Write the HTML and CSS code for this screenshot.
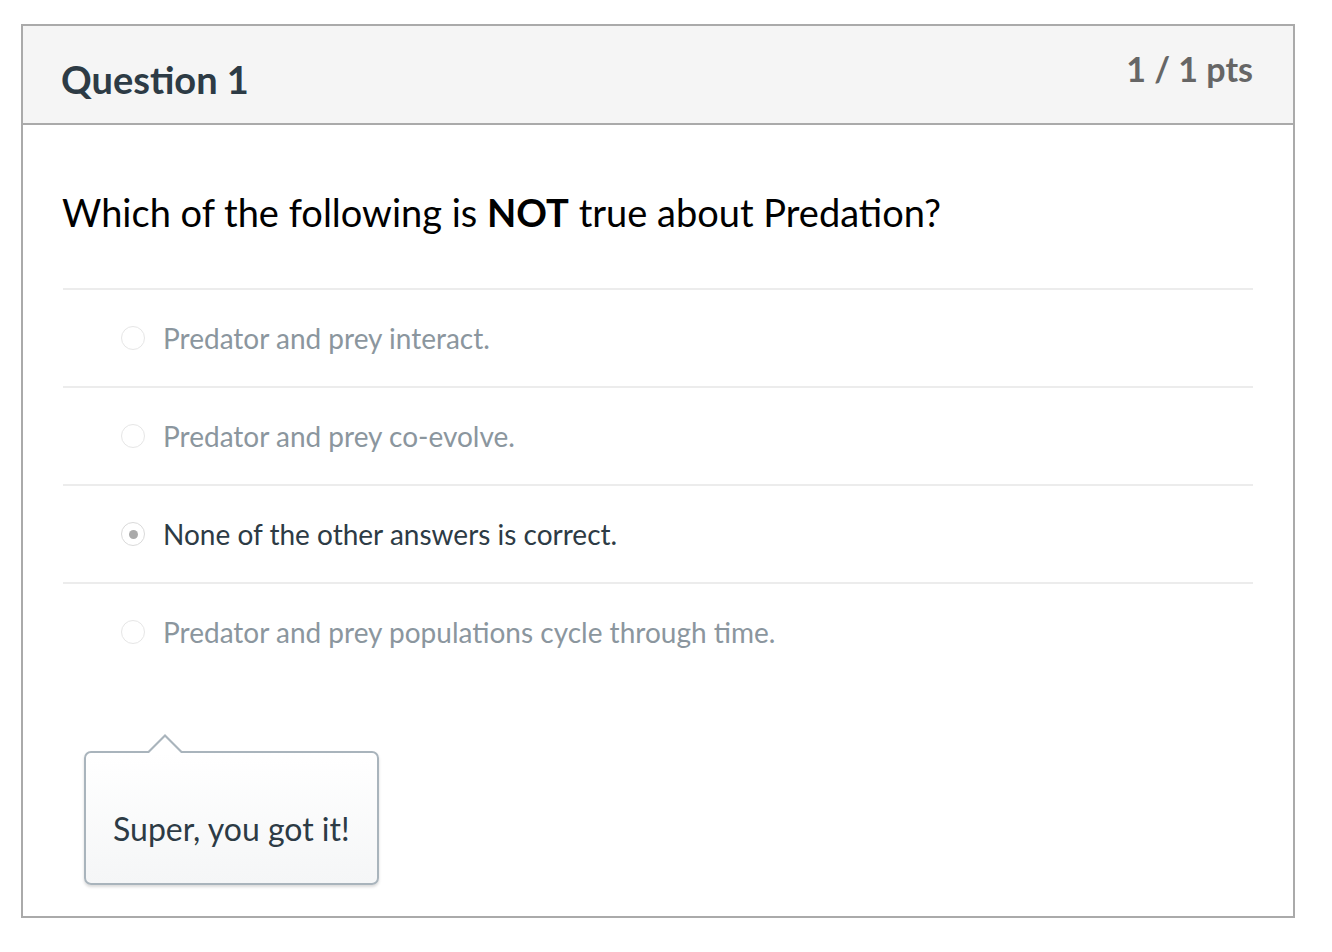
FILE: index.html
```html
<!DOCTYPE html>
<html lang="en">
<head>
<meta charset="utf-8">
<title>Question 1</title>
<link rel="stylesheet" href="styles.css">
</head>
<body>
<div class="page">
  <section class="card">
    <header class="card-header">
      <h2 class="title">Question 1</h2>
      <div class="pts">1 / 1 pts</div>
    </header>
    <div class="card-body">
      <p class="question">Which of the following is <strong>NOT</strong> true about Predation?</p>
      <ul class="answers">
        <li class="answer"><span class="radio"></span><span class="label">Predator and prey interact.</span></li>
        <li class="answer"><span class="radio"></span><span class="label">Predator and prey co-evolve.</span></li>
        <li class="answer selected"><span class="radio"><span class="dot"></span></span><span class="label">None of the other answers is correct.</span></li>
        <li class="answer"><span class="radio"></span><span class="label">Predator and prey populations cycle through time.</span></li>
      </ul>
      <div class="feedback">Super, you got it!</div>
    </div>
  </section>
</div>
</body>
</html>
```
FILE: styles.css
```css
html, body {
  margin: 0;
  padding: 0;
  background: #fff;
}
body {
  font-family: Lato, "Open Sans", sans-serif;
  color: #2d3b45;
}
.page {
  padding: 24px 0 0 21px;
}
.card {
  width: 1270px;
  height: 890px;
  border: 2px solid #aaaaaa;
  display: flex;
  flex-direction: column;
}
.card-header {
  height: 97px;
  background: #f5f5f5;
  border-bottom: 2px solid #aaaaaa;
  display: flex;
  justify-content: space-between;
  align-items: flex-start;
  padding: 0 40px 0 38px;
}
.title {
  margin: 0;
  padding-top: 31px;
  font-size: 38px;
  line-height: 1.2;
  font-weight: 700;
  color: #2d3b45;
}
.pts {
  padding-top: 23px;
  font-size: 34px;
  line-height: 1.2;
  font-weight: 700;
  color: #666666;
}
.card-body {
  padding: 0 40px;
  flex: 1;
}
.question {
  margin: 65px 0 0 -1px;
  font-size: 38px;
  line-height: 1.2;
  color: #000;
}
.question strong {
  font-weight: 700;
}
.answers {
  list-style: none;
  margin: 52px 0 0;
  padding: 0;
}
.answer {
  height: 95px;
  padding-top: 1px;
  border-top: 2px solid #ececec;
  display: flex;
  align-items: center;
  padding-left: 58px;
  font-size: 28px;
  color: #8b969e;
}
.answer.selected {
  color: #2d3b45;
}
.radio {
  width: 22px;
  height: 22px;
  border: 1px solid #e6e6e6;
  border-radius: 50%;
  display: flex;
  align-items: center;
  justify-content: center;
  margin-right: 18px;
  flex: none;
}
.selected .radio {
  border-color: #dadada;
}
.dot {
  width: 9px;
  height: 9px;
  border-radius: 50%;
  background: #aaaaaa;
}
.feedback {
  position: relative;
  margin: 71px 0 0 21px;
  width: fit-content;
  padding: 57px 27px 35px 27px;
  border: 2px solid #a9b4bc;
  border-radius: 7px;
  background: linear-gradient(#ffffff, #f5f6f7);
  box-shadow: 0 2px 3px rgba(0,0,0,0.15);
  font-size: 32px;
  line-height: 1.2;
  color: #2d3b45;
}
.feedback::before,
.feedback::after {
  content: "";
  position: absolute;
  left: 62px;
  width: 0;
  height: 0;
  border-left: 17px solid transparent;
  border-right: 17px solid transparent;
}
.feedback::before {
  top: -19px;
  border-bottom: 17px solid #a9b4bc;
}
.feedback::after {
  top: -16px;
  border-bottom: 17px solid #ffffff;
}
```
